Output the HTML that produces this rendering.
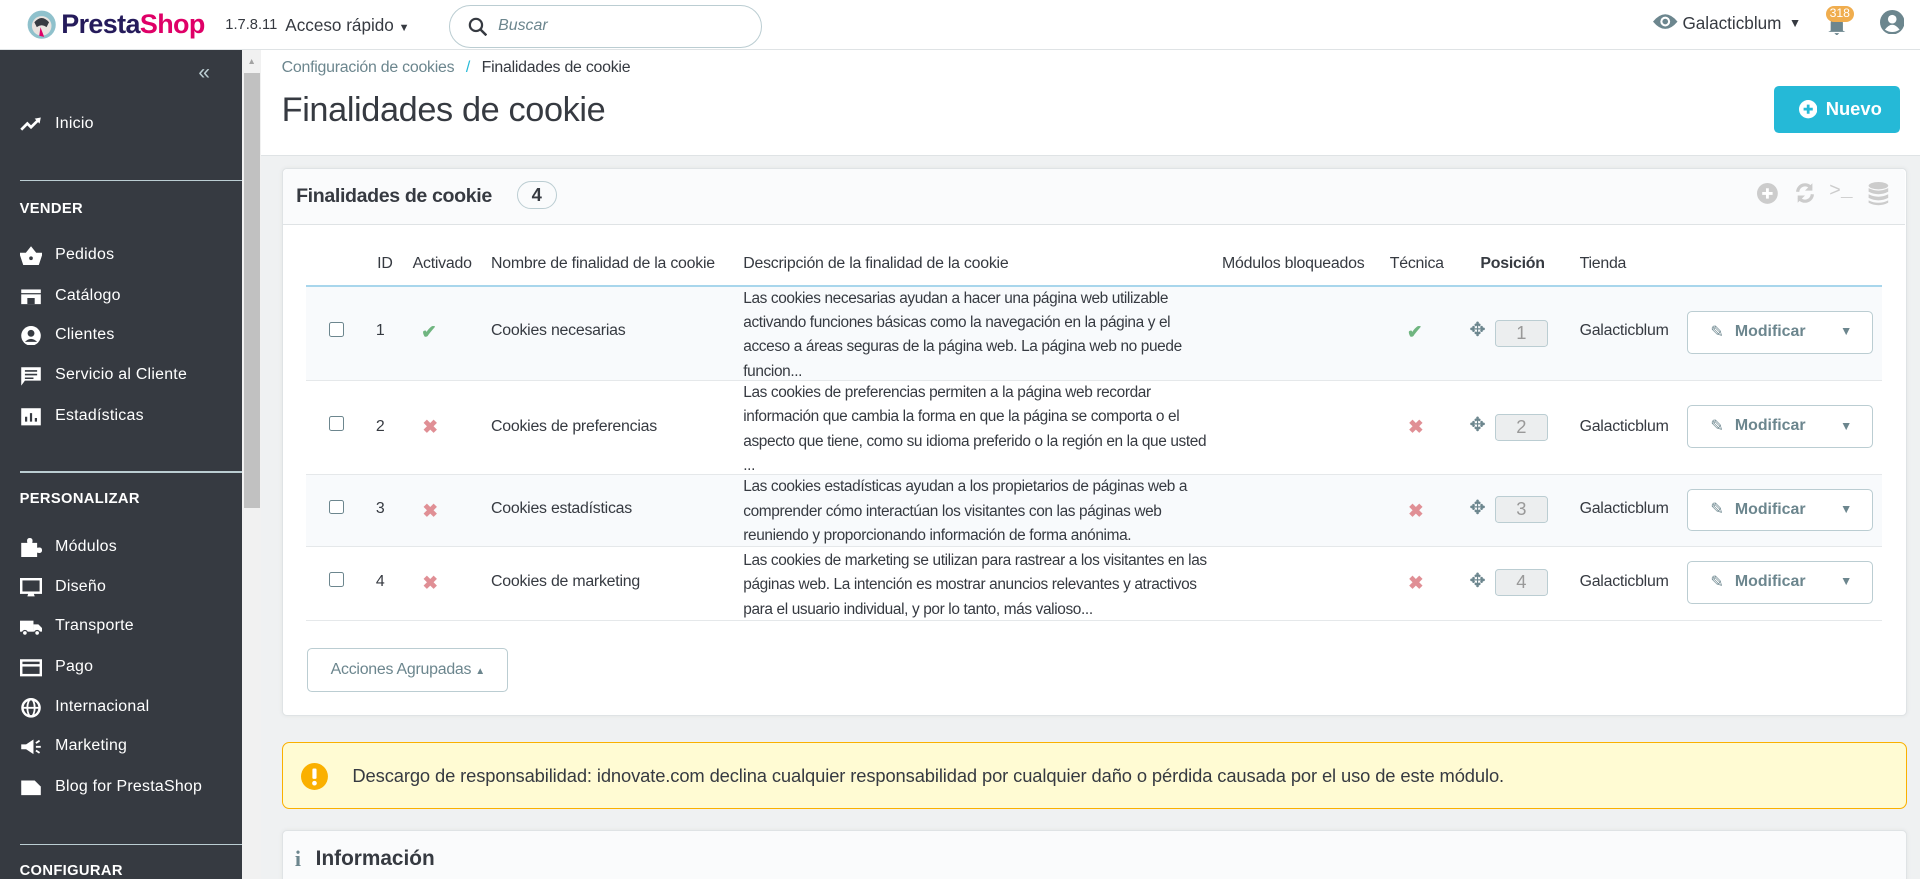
<!DOCTYPE html>
<html><head><meta charset="utf-8"><style>
*{box-sizing:border-box;margin:0;padding:0}
html,body{width:1920px;height:879px;overflow:hidden;background:#eff1f2}
#w{zoom:1.22449;width:1568px;height:718px;position:relative;font-family:"Liberation Sans",sans-serif;color:#363a41;overflow:hidden}
.abs{position:absolute}
#hdr{left:0;top:0;width:1568px;height:41px;background:#fff;border-bottom:1px solid #dfe3e5}
#side{left:0;top:41px;width:198px;height:677px;background:#363a41;color:#fff}
#sb{left:198px;top:41px;width:15px;height:677px;background:#f1f1f1}
#thumb{left:199px;top:60px;width:13px;height:355px;background:#c1c1c1}
.si{position:absolute;left:45px;font-size:13px;color:#fff;letter-spacing:.2px}
.sic{position:absolute;left:16px;width:18px;height:16px}
.sh{position:absolute;left:16px;font-size:12px;font-weight:bold;letter-spacing:.3px}
.sl{position:absolute;left:16px;width:182px;height:1px;background:#bbcdd2}
#top{left:213px;top:41px;width:1355px;height:86px;background:#fff;border-bottom:1px solid #dfe3e5}
.panel{background:#fff;border:1px solid #dfe3e5;border-radius:4px;box-shadow:0 0 4px rgba(0,0,0,.06)}
.row{position:absolute;left:250px;width:1287px;border-bottom:1px solid #e5e8ea}
.c{position:absolute;font-size:13px;color:#363a41;letter-spacing:-.2px}
.desc{position:absolute;left:607px;width:385px;font-size:12.6px;line-height:20px;color:#363a41;letter-spacing:-.3px}
.cb{position:absolute;left:269px;width:12px;height:12px;border:1px solid #6c868e;border-radius:2px;background:#fff}
.pos{position:absolute;left:1221px;width:43px;height:22px;background:#eceeef;border:1px solid #bbcdd2;border-radius:3px;color:#999;text-align:center;font-size:15px;line-height:20px}
.mod{position:absolute;left:1378px;width:152px;height:35px;border:1px solid #bbcdd2;border-radius:4px;background:#fff;font-size:13px;color:#6c868e}
.x{position:absolute;color:#e08f95;font-size:15px;font-weight:bold}
.ok{position:absolute;color:#70b580;font-size:15px;font-weight:bold}
.mv{position:absolute;left:1200px;font-size:16px;color:#6c868e}
</style></head><body><div id="w">
<div id="hdr" class="abs">
 <svg class="abs" style="left:22px;top:8px" width="24" height="24" viewBox="0 0 24 24"><circle cx="12" cy="12" r="11.5" fill="#8fc1cc"/><circle cx="12" cy="13" r="8" fill="#e9e3df"/><path d="M6 10 Q12 3 18 10 L16 14 Q12 11 8 14Z" fill="#363a41"/><path d="M11 14 L14 22 L10 21Z" fill="#df0067"/></svg>
 <div class="abs" style="left:50px;top:7px;font-size:22px;font-weight:bold;letter-spacing:-.5px"><span style="color:#251b5b">Presta</span><span style="color:#df0067">Shop</span></div>
 <div class="abs" style="left:184px;top:14px;font-size:12px;color:#363a41">1.7.8.11</div>
 <div class="abs" style="left:233px;top:12px;font-size:14px">Acceso rápido <span style="font-size:9px">▼</span></div>
 <div class="abs" style="left:367px;top:4px;width:255px;height:35px;border:1px solid #bbcdd2;border-radius:18px">
  <svg class="abs" style="left:14px;top:9px" width="16" height="16" viewBox="0 0 16 16"><circle cx="6.5" cy="6.5" r="5" fill="none" stroke="#363a41" stroke-width="1.8"/><path d="M10 10 L15 15" stroke="#363a41" stroke-width="2"/></svg>
  <div class="abs" style="left:39px;top:9px;font-size:13px;font-style:italic;color:#6c868e">Buscar</div>
 </div>
 <svg class="abs" style="left:1350px;top:11px" width="20" height="14" viewBox="0 0 20 14"><path d="M0 7 Q10 -5 20 7 Q10 19 0 7Z" fill="#6c868e"/><circle cx="10" cy="7" r="4" fill="#fff"/><circle cx="10" cy="7" r="2.3" fill="#6c868e"/></svg>
 <div class="abs" style="left:1374px;top:11px;font-size:14px;color:#363a41">Galacticblum</div>
 <div class="abs" style="left:1461px;top:13px;font-size:10px;color:#363a41">▼</div>
 <svg class="abs" style="left:1492px;top:13px" width="16" height="16" viewBox="0 0 16 16"><path d="M3 12 L3 6 Q3 1 8 1 Q13 1 13 6 L13 12 L15 13 L1 13Z M6 14 L10 14 L8 16Z" fill="#6c868e"/></svg>
 <div class="abs" style="left:1491px;top:5px;width:23px;height:13px;background:#f0ad4e;border-radius:7px;color:#fff;font-size:10px;text-align:center;line-height:13px">318</div>
 <svg class="abs" style="left:1535px;top:8px" width="20" height="20" viewBox="0 0 20 20"><circle cx="10" cy="10" r="10" fill="#6c868e"/><circle cx="10" cy="7.5" r="3.5" fill="#fff"/><path d="M4 16 Q10 8 16 16 Q10 20 4 16Z" fill="#fff"/></svg>
</div>

<div id="side" class="abs">
 <div class="abs" style="left:162px;top:9px;font-size:17px;color:#bbcdd2">«</div>
 <svg class="sic" style="top:53px" viewBox="0 0 18 16"><path d="M1 12 L6 7 L9 10 L15 4" fill="none" stroke="#fff" stroke-width="2.2"/><path d="M12 3 L17 2 L16 7Z" fill="#fff"/></svg>
 <div class="si" style="top:53px">Inicio</div>
 <div class="sl" style="top:106px"></div>
 <div class="sh" style="top:123px">VENDER</div>
 <svg class="sic" style="top:160px" viewBox="0 0 18 16"><path d="M0 6 L18 6 L15 15 L3 15Z M5 6 L9 1 L13 6" fill="#fff" stroke="#fff"/><circle cx="9" cy="10" r="1.5" fill="#363a41"/></svg><div class="si" style="top:160px">Pedidos</div>
 <svg class="sic" style="top:193px" viewBox="0 0 18 16"><rect x="1" y="2" width="16" height="3" fill="#fff"/><rect x="1" y="6" width="16" height="8" fill="#fff"/><rect x="6" y="9" width="6" height="5" fill="#363a41"/></svg><div class="si" style="top:193px">Catálogo</div>
 <svg class="sic" style="top:225px" viewBox="0 0 18 16"><circle cx="9" cy="8" r="8" fill="#fff"/><circle cx="9" cy="6" r="2.8" fill="#363a41"/><path d="M4 13 Q9 8 14 13" fill="#363a41"/></svg><div class="si" style="top:225px">Clientes</div>
 <svg class="sic" style="top:258px" viewBox="0 0 18 16"><path d="M1 1 H17 V12 H4 L1 16Z" fill="#fff"/><path d="M4 4H14M4 7H14M4 10H11" stroke="#363a41" stroke-width="1.3"/></svg><div class="si" style="top:258px">Servicio al Cliente</div>
 <svg class="sic" style="top:291px" viewBox="0 0 18 16"><rect x="1" y="1" width="16" height="14" fill="#fff"/><path d="M5 12V8M9 12V5M13 12V9" stroke="#363a41" stroke-width="1.8"/></svg><div class="si" style="top:291px">Estadísticas</div>
 <div class="sl" style="top:344px"></div>
 <div class="sh" style="top:360px">PERSONALIZAR</div>
 <svg class="sic" style="top:398px" viewBox="0 0 18 16"><path d="M1 4 H6 Q5 0 8 0 Q11 0 10 4 H14 V8 Q18 7 18 10 Q18 13 14 12 V16 H1Z" fill="#fff"/></svg><div class="si" style="top:398px">Módulos</div>
 <svg class="sic" style="top:431px" viewBox="0 0 18 16"><rect x="1" y="1" width="16" height="11" fill="none" stroke="#fff" stroke-width="2"/><path d="M6 15H12L11 12H7Z" fill="#fff"/></svg><div class="si" style="top:431px">Diseño</div>
 <svg class="sic" style="top:463px" viewBox="0 0 18 16"><rect x="0" y="3" width="11" height="9" fill="#fff"/><path d="M11 6H15L18 9V12H11Z" fill="#fff"/><circle cx="4" cy="13" r="2" fill="#fff" stroke="#363a41"/><circle cx="14" cy="13" r="2" fill="#fff" stroke="#363a41"/></svg><div class="si" style="top:463px">Transporte</div>
 <svg class="sic" style="top:496px" viewBox="0 0 18 16"><rect x="1" y="2" width="16" height="12" fill="none" stroke="#fff" stroke-width="2"/><rect x="1" y="5" width="16" height="2" fill="#fff"/></svg><div class="si" style="top:496px">Pago</div>
 <svg class="sic" style="top:529px" viewBox="0 0 18 16"><circle cx="9" cy="8" r="7" fill="none" stroke="#fff" stroke-width="2"/><ellipse cx="9" cy="8" rx="3" ry="7" fill="none" stroke="#fff" stroke-width="1.5"/><path d="M2 8H16" stroke="#fff" stroke-width="1.5"/></svg><div class="si" style="top:529px">Internacional</div>
 <svg class="sic" style="top:561px" viewBox="0 0 18 16"><path d="M1 6H5L11 2V14L5 10H1Z" fill="#fff"/><path d="M13 5L16 3M13 8H17M13 11L16 13" stroke="#fff" stroke-width="1.5"/></svg><div class="si" style="top:561px">Marketing</div>
 <svg class="sic" style="top:594px" viewBox="0 0 18 16"><path d="M1 2H12L17 7V14H1Z" fill="#fff"/></svg><div class="si" style="top:594px">Blog for PrestaShop</div>
 <div class="sl" style="top:648px"></div>
 <div class="sh" style="top:664px">CONFIGURAR</div>
</div>
<div id="sb" class="abs"><div class="abs" style="left:4px;top:5px;font-size:7px;color:#a3a3a3">▲</div></div>
<div id="thumb" class="abs"></div>

<div id="top" class="abs">
 <div class="abs" style="left:17px;top:7px;font-size:13px;color:#6c868e;letter-spacing:-.2px">Configuración de cookies <span style="color:#25b9d7;margin:0 6px">/</span> <span style="color:#363a41">Finalidades de cookie</span></div>
 <div class="abs" style="left:17px;top:33px;font-size:28px;color:#363a41;letter-spacing:-.3px">Finalidades de cookie</div>
 <div class="abs" style="left:1236px;top:29px;width:103px;height:39px;background:#25b9d7;border-radius:4px;color:#fff;font-size:15px;font-weight:bold">
  <svg class="abs" style="left:20px;top:12px" width="15" height="15" viewBox="0 0 16 16"><circle cx="8" cy="8" r="8" fill="#fff"/><path d="M8 4V12M4 8H12" stroke="#25b9d7" stroke-width="2.4"/></svg>
  <span class="abs" style="left:42px;top:10px">Nuevo</span></div>
</div>

<div class="abs panel" style="left:230px;top:137px;width:1327px;height:448px">
 <div class="abs" style="left:0;top:0;width:1325px;height:46px;background:#fafbfc;border-bottom:1px solid #dfe3e5;border-radius:4px 4px 0 0"></div>
 <div class="abs" style="left:11px;top:13px;font-size:16px;font-weight:bold;color:#363a41;letter-spacing:-.3px">Finalidades de cookie</div>
 <div class="abs" style="left:191px;top:10px;width:33px;height:23px;border:1px solid #bbcdd2;border-radius:12px;text-align:center;font-size:15px;font-weight:bold;line-height:21px">4</div>
 <svg class="abs" style="left:1204px;top:12px" width="17" height="17" viewBox="0 0 16 16"><circle cx="8" cy="8" r="8" fill="#ccc"/><path d="M8 4V12M4 8H12" stroke="#fff" stroke-width="2.2"/></svg>
 <svg class="abs" style="left:1234px;top:11px" width="18" height="18" viewBox="0 0 18 18"><path d="M3 8 A6 6 0 0 1 14 5" fill="none" stroke="#ccc" stroke-width="2.6"/><path d="M15 1V7H9Z" fill="#ccc"/><path d="M15 10 A6 6 0 0 1 4 13" fill="none" stroke="#ccc" stroke-width="2.6"/><path d="M3 17V11H9Z" fill="#ccc"/></svg>
 <div class="abs" style="left:1263px;top:9px;font-size:16px;color:#ccc;font-family:'Liberation Mono',monospace">&gt;_</div>
 <svg class="abs" style="left:1295px;top:11px" width="17" height="20" viewBox="0 0 17 20"><ellipse cx="8.5" cy="3" rx="8" ry="3" fill="#ccc"/><path d="M0.5 5 Q8.5 9 16.5 5V8Q8.5 12 0.5 8Z M0.5 10 Q8.5 14 16.5 10V13Q8.5 17 0.5 13Z M0.5 15 Q8.5 19 16.5 15V17Q8.5 21 0.5 17Z" fill="#ccc"/></svg>
</div>

<div class="c" style="left:308px;top:208px">ID</div>
<div class="c" style="left:337px;top:208px">Activado</div>
<div class="c" style="left:401px;top:208px">Nombre de finalidad de la cookie</div>
<div class="c" style="left:607px;top:208px">Descripción de la finalidad de la cookie</div>
<div class="c" style="left:998px;top:208px">Módulos bloqueados</div>
<div class="c" style="left:1135px;top:208px">Técnica</div>
<div class="c" style="left:1209px;top:208px;font-weight:bold">Posición</div>
<div class="c" style="left:1290px;top:208px">Tienda</div>
<div class="abs" style="left:250px;top:233px;width:1287px;height:1px;background:#a8d6ec"></div>

<div class="row" style="top:234px;height:77px;background:#f8fafc"></div>
<div class="row" style="top:311px;height:77px"></div>
<div class="row" style="top:388px;height:59px;background:#f8fafc"></div>
<div class="row" style="top:447px;height:60px"></div>

<div class="cb" style="top:263px"></div><div class="c" style="left:307px;top:263px">1</div>
<div class="ok" style="left:344px;top:262px">✔</div>
<div class="c" style="left:401px;top:263px">Cookies necesarias</div>
<div class="desc" style="top:234px">Las cookies necesarias ayudan a hacer una página web utilizable activando funciones básicas como la navegación en la página y el acceso a áreas seguras de la página web. La página web no puede funcion...</div>
<div class="ok" style="left:1149px;top:262px">✔</div>

<div class="cb" style="top:340px"></div><div class="c" style="left:307px;top:341px">2</div>
<div class="x" style="left:345px;top:340px">✖</div>
<div class="c" style="left:401px;top:341px">Cookies de preferencias</div>
<div class="desc" style="top:311px">Las cookies de preferencias permiten a la página web recordar información que cambia la forma en que la página se comporta o el aspecto que tiene, como su idioma preferido o la región en la que usted ...</div>
<div class="x" style="left:1150px;top:340px">✖</div>

<div class="cb" style="top:408px"></div><div class="c" style="left:307px;top:408px">3</div>
<div class="x" style="left:345px;top:408px">✖</div>
<div class="c" style="left:401px;top:408px">Cookies estadísticas</div>
<div class="desc" style="top:388px">Las cookies estadísticas ayudan a los propietarios de páginas web a comprender cómo interactúan los visitantes con las páginas web reuniendo y proporcionando información de forma anónima.</div>
<div class="x" style="left:1150px;top:408px">✖</div>

<div class="cb" style="top:467px"></div><div class="c" style="left:307px;top:468px">4</div>
<div class="x" style="left:345px;top:467px">✖</div>
<div class="c" style="left:401px;top:468px">Cookies de marketing</div>
<div class="desc" style="top:448px">Las cookies de marketing se utilizan para rastrear a los visitantes en las páginas web. La intención es mostrar anuncios relevantes y atractivos para el usuario individual, y por lo tanto, más valioso...</div>
<div class="x" style="left:1150px;top:467px">✖</div>

<div class="mv" style="top:260px">✥</div><div class="pos" style="top:261px">1</div><div class="c" style="left:1290px;top:263px">Galacticblum</div>
<div class="mv" style="top:337px">✥</div><div class="pos" style="top:338px">2</div><div class="c" style="left:1290px;top:341px">Galacticblum</div>
<div class="mv" style="top:405px">✥</div><div class="pos" style="top:405px">3</div><div class="c" style="left:1290px;top:408px">Galacticblum</div>
<div class="mv" style="top:465px">✥</div><div class="pos" style="top:465px">4</div><div class="c" style="left:1290px;top:468px">Galacticblum</div>

<div class="mod" style="top:254px"><span class="abs" style="left:18px;top:8px">✎</span><span class="abs" style="left:38px;top:9px;font-weight:bold">Modificar</span><span class="abs" style="left:124px;top:10px;font-size:10px">▼</span></div>
<div class="mod" style="top:331px"><span class="abs" style="left:18px;top:8px">✎</span><span class="abs" style="left:38px;top:9px;font-weight:bold">Modificar</span><span class="abs" style="left:124px;top:10px;font-size:10px">▼</span></div>
<div class="mod" style="top:399px"><span class="abs" style="left:18px;top:8px">✎</span><span class="abs" style="left:38px;top:9px;font-weight:bold">Modificar</span><span class="abs" style="left:124px;top:10px;font-size:10px">▼</span></div>
<div class="mod" style="top:458px"><span class="abs" style="left:18px;top:8px">✎</span><span class="abs" style="left:38px;top:9px;font-weight:bold">Modificar</span><span class="abs" style="left:124px;top:10px;font-size:10px">▼</span></div>

<div class="abs" style="left:251px;top:529px;width:164px;height:36px;border:1px solid #bbcdd2;border-radius:4px;background:#fff;font-size:13px;color:#6c868e;text-align:center;line-height:34px;letter-spacing:-.2px">Acciones Agrupadas <span style="font-size:8px">▲</span></div>

<div class="abs" style="left:230px;top:606px;width:1327px;height:55px;background:#fffbd3;border:1px solid #fab000;border-radius:6px">
 <svg class="abs" style="left:15px;top:16px" width="22" height="22" viewBox="0 0 22 22"><circle cx="11" cy="11" r="11" fill="#fab000"/><rect x="9.3" y="4.5" width="3.4" height="8.5" rx="1" fill="#fff"/><circle cx="11" cy="16.5" r="1.9" fill="#fff"/></svg>
 <div class="abs" style="left:57px;top:18px;font-size:15px;color:#363a41;letter-spacing:-.1px">Descargo de responsabilidad: idnovate.com declina cualquier responsabilidad por cualquier daño o pérdida causada por el uso de este módulo.</div>
</div>

<div class="abs panel" style="left:230px;top:678px;width:1327px;height:60px;background:#fafbfc">
 <div class="abs" style="left:10px;top:12px;font-size:18px;font-weight:bold;color:#6c868e;font-family:'Liberation Serif',serif">i</div>
 <div class="abs" style="left:27px;top:13px;font-size:17px;font-weight:bold;color:#363a41">Información</div>
</div>
</div></body></html>
